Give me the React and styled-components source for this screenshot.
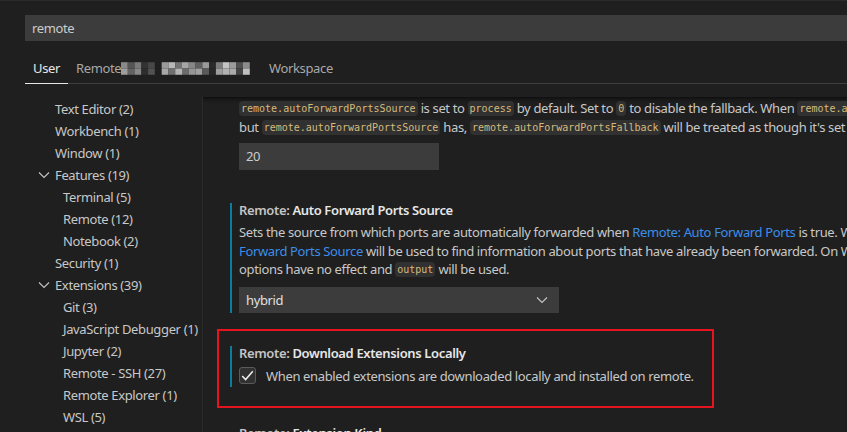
import React from "react";
import styled, { createGlobalStyle } from "styled-components";

const UI_FONT = `"Noto Sans", "Open Sans", sans-serif`;
const CODE_FONT = `"DejaVu Sans Mono", "Liberation Mono", monospace`;

const GlobalStyle = createGlobalStyle`
  html, body {
    margin: 0;
    padding: 0;
    background: #1f1f1f;
    overflow: hidden;
  }
  * {
    box-sizing: border-box;
  }
`;

// Whole settings editor
const Page = styled.div`
  width: 847px;
  height: 432px;
  overflow: hidden;
  display: flex;
  flex-direction: column;
  background: #1f1f1f;
  border-top: 1px solid #2b2b2b;
  font-family: ${UI_FONT};
  font-size: 13px;
  letter-spacing: -0.36px;
  color: #cccccc;
`;

const Header = styled.div`
  padding: 14px 0 0 25px;
`;

const SearchBox = styled.div`
  height: 26px;
  line-height: 26px;
  padding-left: 7px;
  background: #3c3c3c;
  color: #cccccc;
`;

const TabBar = styled.div`
  display: flex;
  margin-top: 12px;
  height: 31px;
  border-bottom: 1px solid #3f3f3f;
`;

const Tab = styled.div`
  display: flex;
  align-items: center;
  height: 31px;
  padding: 0 8px;
  margin-bottom: -1px;
  border-bottom: 1px solid ${(p) => (p.$active ? "#e7e7e7" : "transparent")};
  color: ${(p) => (p.$active ? "#e7e7e7" : "#a8a8a8")};
  width: ${(p) => p.$width || "auto"};
  white-space: nowrap;
`;

const Body = styled.div`
  flex: 1;
  display: flex;
  margin-top: 13px;
  min-height: 0;
`;

// Table of contents
const Sidebar = styled.div`
  width: 203px;
  flex-shrink: 0;
  border-right: 1px solid #2b2b2b;
  padding-top: 1px;
`;

const TreeItem = styled.div`
  display: flex;
  align-items: center;
  height: 22px;
  padding-left: ${(p) => (p.$chevron ? 36 : p.$level === 2 ? 63 : 55)}px;
  color: #c8c8c8;
  white-space: nowrap;
  svg {
    margin-right: 3px;
  }
`;

// Settings list
const Content = styled.div`
  flex: 1;
  overflow: hidden;
  padding: 2px 0 0 27px;
  box-shadow: inset 0 6px 6px -6px #000;
`;

const PartialSetting = styled.div`
  padding-left: 9px;
`;

const Setting = styled.div`
  border-left: 2px solid ${(p) => (p.$modified ? "#0c7d9d" : "transparent")};
  padding-left: 7px;
  margin-top: ${(p) => p.$top || 0}px;
`;

const Title = styled.div`
  line-height: 14px;
  font-weight: 600;
  color: #e7e7e7;
  white-space: nowrap;
`;

const Category = styled.span`
  color: #c4c4c4;
`;

const Desc = styled.div`
  margin-top: ${(p) => p.$top || 0}px;
  color: #c8c8c8;
`;

const Line = styled.div`
  height: 18.6px;
  line-height: 18.6px;
  white-space: nowrap;
`;

const Code = styled.span`
  display: inline-block;
  font-family: ${CODE_FONT};
  font-size: 10px;
  letter-spacing: 0;
  line-height: 15px;
  padding: 0 2px;
  border-radius: 4px;
  background: #313131;
  color: #d7ba7d;
  vertical-align: 1px;
`;

const Link = styled.span`
  color: #3b8eea;
`;

const TextInput = styled.div`
  margin-top: 7px;
  width: 200px;
  height: 27px;
  line-height: 27px;
  padding-left: 7px;
  background: #3c3c3c;
  color: #cccccc;
`;

const Select = styled.div`
  margin-top: 8px;
  width: 320px;
  height: 26px;
  display: flex;
  align-items: center;
  justify-content: space-between;
  padding: 0 9px 0 7px;
  background: #3c3c3c;
  color: #e0e0e0;
`;

// Red annotation frame around one setting
const Highlight = styled.div`
  margin: 16px 0 0 -13px;
  width: 497px;
  border: 2px solid #e5141f;
  padding: 15px 0 19px 11px;
`;

const CheckRow = styled.div`
  display: flex;
  align-items: center;
  height: 22px;
  margin-top: 5px;
  white-space: nowrap;
  color: #c8c8c8;
`;

const CheckBox = styled.div`
  width: 17px;
  height: 17px;
  margin-right: 10px;
  border: 1px solid #5a5a5a;
  border-radius: 3px;
  background: #313131;
  display: flex;
  align-items: center;
  justify-content: center;
`;

const Chevron = ({ w = 16 }) => (
  <svg width={w} height={w} viewBox="0 0 16 16">
    <polyline
      points="3,5.5 8,10.5 13,5.5"
      fill="none"
      stroke="#c5c5c5"
      strokeWidth="1.1"
    />
  </svg>
);

const Check = () => (
  <svg width="15" height="15" viewBox="0 0 15 15">
    <polyline
      points="2.2,8 5.6,11.6 12.8,3.2"
      fill="none"
      stroke="#f0f0f0"
      strokeWidth="1.5"
    />
  </svg>
);

// Pixelated part of the remote tab name
const mosaic = [
  [0x8a, 0x55, 0x7a, 0x33, 0x48, 0x1f, 0x9a, 0xb8, 0x74, 0xa6, 0x86, 0x60, 0x9a, 0x2a, 0x7c, 0xc4, 0x9c, 0x50, 0x8c],
  [0x9e, 0x62, 0x88, 0x2e, 0x52, 0x1f, 0xa8, 0x70, 0xb4, 0x6c, 0x96, 0xa0, 0x5a, 0x28, 0x9e, 0xb2, 0xaa, 0x44, 0xc0],
];

const Mosaic = () => (
  <svg width="136" height="16" viewBox="0 0 136 16">
    {mosaic.map((row, r) =>
      row.map((v, c) => (
        <rect
          key={`${r}-${c}`}
          x={c * 7}
          y={2 + r * 6.5}
          width="7"
          height="6.5"
          fill={`rgb(${v},${v},${v})`}
        />
      ))
    )}
  </svg>
);

const tree = [
  { label: "Text Editor (2)" },
  { label: "Workbench (1)" },
  { label: "Window (1)" },
  { label: "Features (19)", chevron: true },
  { label: "Terminal (5)", level: 2 },
  { label: "Remote (12)", level: 2 },
  { label: "Notebook (2)", level: 2 },
  { label: "Security (1)" },
  { label: "Extensions (39)", chevron: true },
  { label: "Git (3)", level: 2 },
  { label: "JavaScript Debugger (1)", level: 2 },
  { label: "Jupyter (2)", level: 2 },
  { label: "Remote - SSH (27)", level: 2 },
  { label: "Remote Explorer (1)", level: 2 },
  { label: "WSL (5)", level: 2 },
];

const App = () => {
  return (
    <Page>
      <GlobalStyle />
      <Header>
        <SearchBox>remote</SearchBox>
        <TabBar>
          <Tab $active>User</Tab>
          <Tab $width="193px">
            Remote
            <Mosaic />
          </Tab>
          <Tab>Workspace</Tab>
        </TabBar>
      </Header>

      <Body>
        <Sidebar>
          {tree.map((item) => (
            <TreeItem key={item.label} $level={item.level} $chevron={item.chevron}>
              {item.chevron && <Chevron />}
              {item.label}
            </TreeItem>
          ))}
        </Sidebar>

        <Content>
          <PartialSetting>
            <Desc>
              <Line>
                <Code>remote.autoForwardPortsSource</Code> is set to <Code>process</Code> by
                default. Set to <Code>0</Code> to disable the fallback. When{" "}
                <Code>remote.autoForwardPortsFallback</Code> is greater than 0
              </Line>
              <Line>
                but <Code>remote.autoForwardPortsSource</Code> has,{" "}
                <Code>remote.autoForwardPortsFallback</Code> will be treated as though it's set to{" "}
                <Code>0</Code>.
              </Line>
            </Desc>
            <TextInput>20</TextInput>
          </PartialSetting>

          <Setting $modified $top={33}>
            <Title>
              <Category>Remote: </Category>Auto Forward Ports Source
            </Title>
            <Desc $top={6}>
              <Line>
                Sets the source from which ports are automatically forwarded when{" "}
                <Link>Remote: Auto Forward Ports</Link> is true. When <Link>Remote: Auto</Link>
              </Line>
              <Line>
                <Link>Forward Ports Source</Link> will be used to find information about ports
                that have already been forwarded. On Windows and macOS remotes, the{" "}
                <Code>process</Code>
              </Line>
              <Line>
                options have no effect and <Code>output</Code> will be used.
              </Line>
            </Desc>
            <Select>
              hybrid
              <Chevron />
            </Select>
          </Setting>

          <Highlight>
            <Setting $modified>
              <Title>
                <Category>Remote: </Category>Download Extensions Locally
              </Title>
              <CheckRow>
                <CheckBox>
                  <Check />
                </CheckBox>
                When enabled extensions are downloaded locally and installed on remote.
              </CheckRow>
            </Setting>
          </Highlight>

          <Setting $top={18}>
            <Title>
              <Category>Remote: </Category>Extension Kind
            </Title>
          </Setting>
        </Content>
      </Body>
    </Page>
  );
};

export default App;
